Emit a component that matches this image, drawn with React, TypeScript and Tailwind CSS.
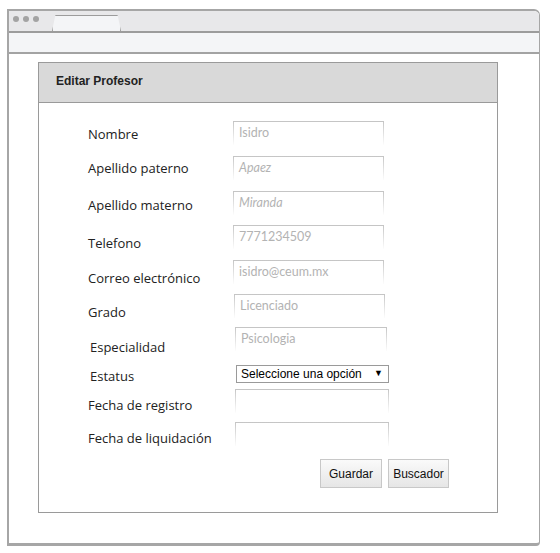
import React from "react";

type Row = {
  label: string;
  labelX: number;
  labelTop: number;
  inputX: number;
  inputW: number;
  height: number;
  value?: string;
  italic?: boolean;
  select?: boolean;
};

const rows: Row[] = [
  { label: "Nombre", labelX: 0, labelTop: 4, inputX: 0, inputW: 151, height: 35, value: "Isidro" },
  { label: "Apellido paterno", labelX: 0, labelTop: 3, inputX: 0, inputW: 151, height: 35, value: "Apaez", italic: true },
  { label: "Apellido materno", labelX: 0, labelTop: 5, inputX: 0, inputW: 151, height: 34, value: "Miranda", italic: true },
  { label: "Telefono", labelX: 0, labelTop: 9, inputX: 0, inputW: 151, height: 35, value: "7771234509" },
  { label: "Correo electrónico", labelX: 0, labelTop: 9, inputX: 0, inputW: 151, height: 34, value: "isidro@ceum.mx" },
  { label: "Grado", labelX: 0, labelTop: 9, inputX: 1, inputW: 151, height: 33, value: "Licenciado" },
  { label: "Especialidad", labelX: 2, labelTop: 11, inputX: 2, inputW: 152, height: 38, value: "Psicologia" },
  { label: "Estatus", labelX: 2, labelTop: 2, inputX: 3, inputW: 153, height: 24, select: true },
  { label: "Fecha de registro", labelX: 0, labelTop: 7, inputX: 2, inputW: 154, height: 33, value: "" },
  { label: "Fecha de liquidación", labelX: 0, labelTop: 7, inputX: 2, inputW: 154, height: 24, value: "" },
];

function SketchInput({ value, italic, width, offset }: { value?: string; italic?: boolean; width: number; offset: number }) {
  return (
    <div
      className="h-[24px] border-t border-x border-b-0 [border-image:linear-gradient(to_bottom,#c4c4c4,#ffffff00)_1] px-[5px] pt-[2px] text-[12.5px] text-[#b3b3b3] font-['Lato',sans-serif]"
      style={{ width, marginLeft: offset }}
    >
      <span className={italic ? "italic" : ""}>{value}</span>
    </div>
  );
}

function SketchSelect({ width, offset }: { width: number; offset: number }) {
  return (
    <div
      className="flex h-[18px] items-center justify-between border border-[#9a9a9a] bg-white pl-[4px] pr-[5px] text-[12px] text-black font-['Liberation_Sans',Arial,sans-serif]"
      style={{ width, marginLeft: offset }}
    >
      <span>Seleccione una opción</span>
      <span className="text-[9px]">▼</span>
    </div>
  );
}

export default function App() {
  return (
    <div className="h-[553px] w-[560px] bg-white pl-[7px] pt-[9px]">
      <div className="flex h-[537px] w-[533px] flex-col rounded-tr-[6px] rounded-br-[4px] border-2 border-r border-b-[3px] border-[#a6a6a6] bg-white">
        {/* tab bar */}
        <div className="flex h-[22px] items-end border-b-2 border-[#9c9c9c] bg-[#e8e8ea] rounded-tr-[5px]">
          <div className="mb-[5px] ml-[4px] flex gap-[4px] self-center">
            <span className="h-[6px] w-[6px] rounded-full bg-[#a3a3a3]" />
            <span className="h-[6px] w-[6px] rounded-full bg-[#a3a3a3]" />
            <span className="h-[6px] w-[6px] rounded-full bg-[#a3a3a3]" />
          </div>
          <div className="ml-[13px] h-[16px] w-[69px] rounded-t-[3px] border-x border-t border-[#9c9c9c] bg-[#f4f5f7] [clip-path:polygon(0_100%,5%_0,95%_0,100%_100%)]" />
        </div>
        {/* address bar */}
        <div className="h-[21px] border-b-2 border-[#a3a3a3] bg-[#f4f5f7]" />
        {/* content */}
        <div className="pl-[29px] pt-[8px]">
          <div className="h-[451px] w-[460px] border border-[#9a9a9a] bg-white">
            <div className="flex h-[40px] items-center border-b border-[#9a9a9a] bg-[#d9d9d9] pl-[17px] pb-[4px] text-[12px] font-bold text-[#222] font-['Liberation_Sans',Arial,sans-serif]">
              Editar Profesor
            </div>
            <div className="flex flex-col pl-[49px] pt-[18px]">
              {rows.map((r) => (
                <div key={r.label} className="flex" style={{ height: r.height }}>
                  <div
                    className="w-[145px] text-[13px] leading-[18px] text-[#222] font-['Open_Sans',sans-serif]"
                    style={{ paddingTop: r.labelTop, paddingLeft: r.labelX }}
                  >
                    {r.label}
                  </div>
                  {r.select ? (
                    <SketchSelect width={r.inputW} offset={r.inputX} />
                  ) : (
                    <SketchInput value={r.value} italic={r.italic} width={r.inputW} offset={r.inputX} />
                  )}
                </div>
              ))}
              <div className="mt-[13px] flex justify-end gap-[6px] pr-[48px]">
                <button className="h-[29px] w-[62px] border border-[#c8c8c8] bg-gradient-to-b from-[#fafafa] to-[#e6e6e6] text-[12px] text-[#111] font-['Liberation_Sans',Arial,sans-serif]">
                  Guardar
                </button>
                <button className="h-[29px] w-[61px] border border-[#c8c8c8] bg-gradient-to-b from-[#fafafa] to-[#e6e6e6] text-[12px] text-[#111] font-['Liberation_Sans',Arial,sans-serif]">
                  Buscador
                </button>
              </div>
            </div>
          </div>
        </div>
      </div>
    </div>
  );
}
